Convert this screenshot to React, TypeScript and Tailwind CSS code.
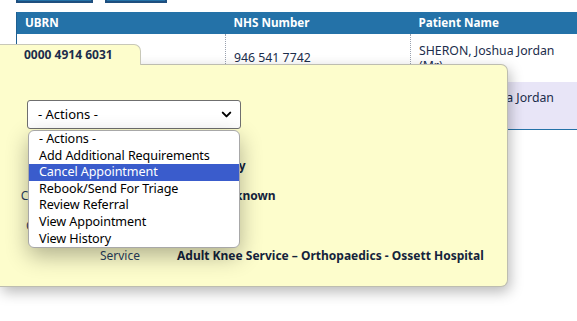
import { ChevronDown } from 'lucide-react'

const actions = [
    '- Actions -',
    'Add Additional Requirements',
    'Cancel Appointment',
    'Rebook/Send For Triage',
    'Review Referral',
    'View Appointment',
    'View History'
]

const details = [
    { label: 'Date', value: 'Wednesday' },
    { label: 'Consultant / Clinician', value: 'Status Unknown' },
    { label: 'Clinic Type Required', value: 'Routine' },
    { label: 'Service', value: 'Adult Knee Service \u2013 Orthopaedics - Ossett Hospital' }
]

function PatientTable() {
    return (
        <table className="ml-[16px] mt-[9px] w-[561px] table-fixed border-collapse border-l border-[#1f5f91] text-[12.3px] text-[#1b2d4b]">
            <thead>
                <tr className="h-[22px] bg-[#2472a8] text-left text-[11.7px] text-white">
                    <th className="w-[209px] px-2 font-bold">UBRN</th>
                    <th className="w-[185px] px-2 font-bold">NHS Number</th>
                    <th className="px-2 font-bold">Patient Name</th>
                </tr>
            </thead>
            <tbody>
                <tr className="h-[48px] bg-white">
                    <td className="border-r border-dotted border-gray-400 px-2 align-middle"></td>
                    <td className="border-r border-dotted border-gray-400 px-2 align-middle">946 541 7742</td>
                    <td className="px-2 align-middle leading-[15px]">SHERON, Joshua Jordan (Mr)</td>
                </tr>
                <tr className="h-[47px] border-b border-[#2472a8] bg-[#e8e5f7]">
                    <td className="px-2 align-middle"></td>
                    <td className="px-2 align-middle"></td>
                    <td className="px-2 align-middle leading-[15px]">SHERON, Joshua Jordan (Mr)</td>
                </tr>
            </tbody>
        </table>
    )
}

function ReferralPopup() {
    return (
        <div className="absolute left-0 top-[44px] flex flex-col">
            <div className="relative z-10 -mb-px flex h-[21px] w-[141px] items-center rounded-tr-[7px] border-r border-t border-[#c8c8b8] bg-[#fdfdcc] pl-[24px] text-[12px] font-bold text-[#1b2d4b]">
                0000 4914 6031
            </div>
            <div className="h-[223px] w-[508px] rounded-r-[7px] border-r border-t border-b border-[#bdbdb0] bg-[#fdfdcc] shadow-[2px_5px_14px_rgba(0,0,0,0.28)]">
                <div className="ml-[27px] mt-[35px] flex h-[29px] w-[214px] items-center justify-between rounded-[3px] border border-[#6f6f6f] bg-white pl-[10px] pr-[6px] text-[13px] text-black">
                    <span>- Actions -</span>
                    <ChevronDown size={15} strokeWidth={3.2} />
                </div>
                <div className="mt-[28px] flex flex-col gap-[13px] text-[12px]">
                    {details.map((row) => (
                        <div key={row.label} className="flex h-[17px] items-center">
                            <span className="w-[140px] whitespace-nowrap text-right text-[#2a3f5f]">{row.label}</span>
                            <span className="ml-[37px] whitespace-nowrap font-bold text-[#14233c]">{row.value}</span>
                        </div>
                    ))}
                </div>
            </div>
        </div>
    )
}

function ActionsList() {
    return (
        <ul className="absolute left-[28px] top-[130px] z-20 w-[212px] overflow-hidden rounded-[6px] border border-[#a8a8a8] bg-white text-[12.6px] leading-[16.6px] tracking-[-0.1px] text-black shadow-[0_8px_22px_rgba(0,0,0,0.3)]">
            {actions.map((action) => (
                <li
                    key={action}
                    className={
                        action === 'Cancel Appointment'
                            ? 'h-[16.6px] bg-[#3a5ccc] pl-[10px] text-white'
                            : 'h-[16.6px] pl-[10px]'
                    }
                >
                    {action}
                </li>
            ))}
        </ul>
    )
}

export default function App() {
    return (
        <div className="relative h-[321px] w-[577px] overflow-hidden bg-white font-['Noto_Sans',sans-serif]">
            <div className="flex gap-[12px] pl-[16px]">
                <div className="-mt-[27px] h-[30px] w-[77px] border-2 border-[#1f4f7f] bg-[#2472a8]" />
                <div className="-mt-[27px] h-[30px] w-[62px] border-2 border-[#1f4f7f] bg-[#2472a8]" />
            </div>
            <PatientTable />
            <ReferralPopup />
            <ActionsList />
        </div>
    )
}
